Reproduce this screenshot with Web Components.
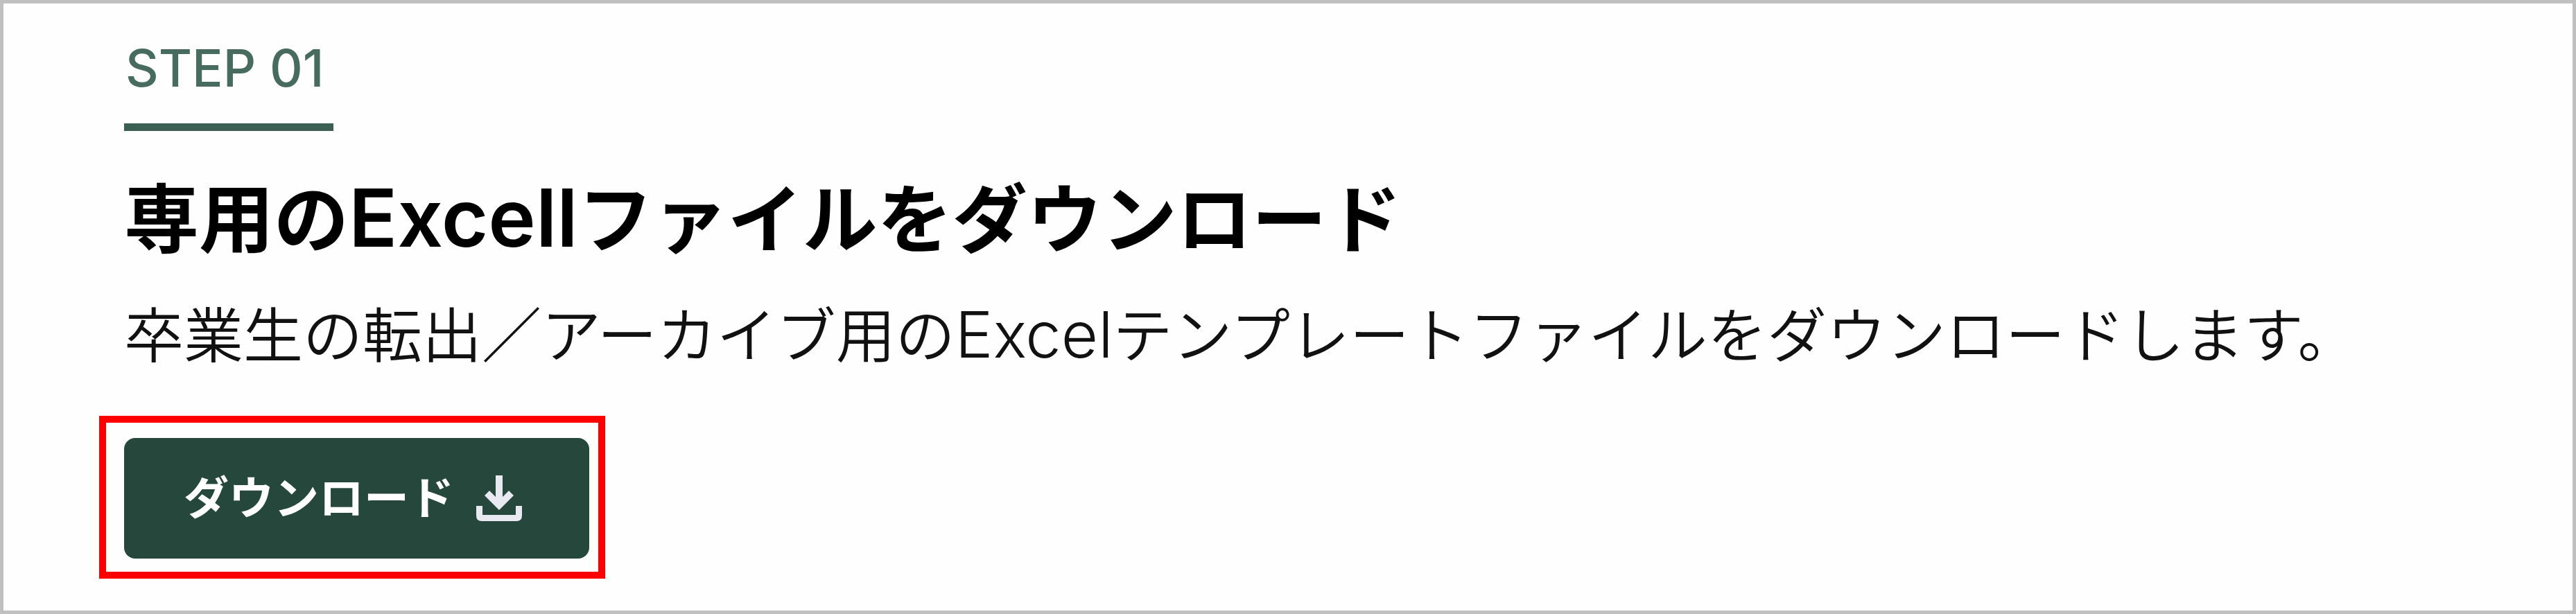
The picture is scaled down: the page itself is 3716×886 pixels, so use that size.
<!DOCTYPE html>
<html lang="ja">
<head>
<meta charset="utf-8">
<meta name="viewport" content="width=device-width, initial-scale=1">
<title>STEP 01</title>
<style>
body { margin: 0; background: #fefefe; font-family: Inter, "Noto Sans CJK JP", sans-serif; }
step-title span { font-size: 116px; line-height: 1; font-weight: 600; }
step-text span { font-size: 92px; line-height: 1; font-weight: 350; }
</style>
</head>
<body>
<step-card>
  <step-label slot="label">STEP 01</step-label>
  <step-title slot="title">専用の<span>Excell</span>ファイルをダウンロード</step-title>
  <step-text slot="text">卒業生の転出／アーカイブ用の<span>Excel</span>テンプレートファイルをダウンロードします。</step-text>
  <focus-frame slot="action"><download-button>ダウンロード</download-button></focus-frame>
</step-card>
<script>
function define(name, html) {
  const template = document.createElement('template');
  template.innerHTML = html;
  customElements.define(name, class extends HTMLElement {
    constructor() {
      super();
      this.attachShadow({ mode: 'open' }).append(template.content.cloneNode(true));
    }
  });
}

define('step-card', `
<style>
:host { display: block; box-sizing: border-box; min-height: 100vh; border: 5px solid #c0c0c0; padding: 48px 136px 40px 174px; }
section { display: flex; flex-direction: column; align-items: flex-start; }
</style>
<section>
  <slot name="label"></slot>
  <slot name="title"></slot>
  <slot name="text"></slot>
  <slot name="action"></slot>
</section>`);

define('step-label', `
<style>
:host { display: block; border-bottom: 11px solid #3c5f53; padding: 0 14px 35px 2px; color: #486b5f; font-size: 74px; line-height: 90px; font-weight: 500; }
</style>
<slot></slot>`);

define('step-title', `
<style>
:host { display: block; margin-top: 58px; }
h2 { margin: 0; color: #000; font-size: 108px; line-height: 140px; font-weight: 700; }
</style>
<h2><slot></slot></h2>`);

define('step-text', `
<style>
:host { display: block; margin-top: 38px; }
p { margin: 0; color: #111; font-size: 86px; line-height: 120px; font-weight: 350; }
</style>
<p><slot></slot></p>`);

define('focus-frame', `
<style>
:host { display: block; margin: 55px 0 0 -36px; border: 10px solid #f00; padding: 22px 13px 19px 26px; }
</style>
<slot></slot>`);

define('download-button', `
<style>
:host { display: block; }
button { display: flex; align-items: center; justify-content: center; gap: 32px; box-sizing: border-box; height: 174px; margin: 0; padding: 0 97px 0 86px; border: 0; border-radius: 16px; background: #26483c; color: #fff; font: inherit; font-size: 65px; line-height: 90px; font-weight: 700; white-space: nowrap; }
svg { display: block; width: 66px; height: 66px; flex: none; }
</style>
<button type="button">
  <slot></slot>
  <svg viewBox="0 0 66 66" fill="#e9e9f1" aria-hidden="true">
    <path d="M28 0h10v31l9-9 7 7-21 21-21-21 7-7 9 9z"/>
    <path d="M0 44h9v13h48V44h9v14q0 8-8 8H8q-8 0-8-8z"/>
  </svg>
</button>`);
</script>
</body>
</html>
